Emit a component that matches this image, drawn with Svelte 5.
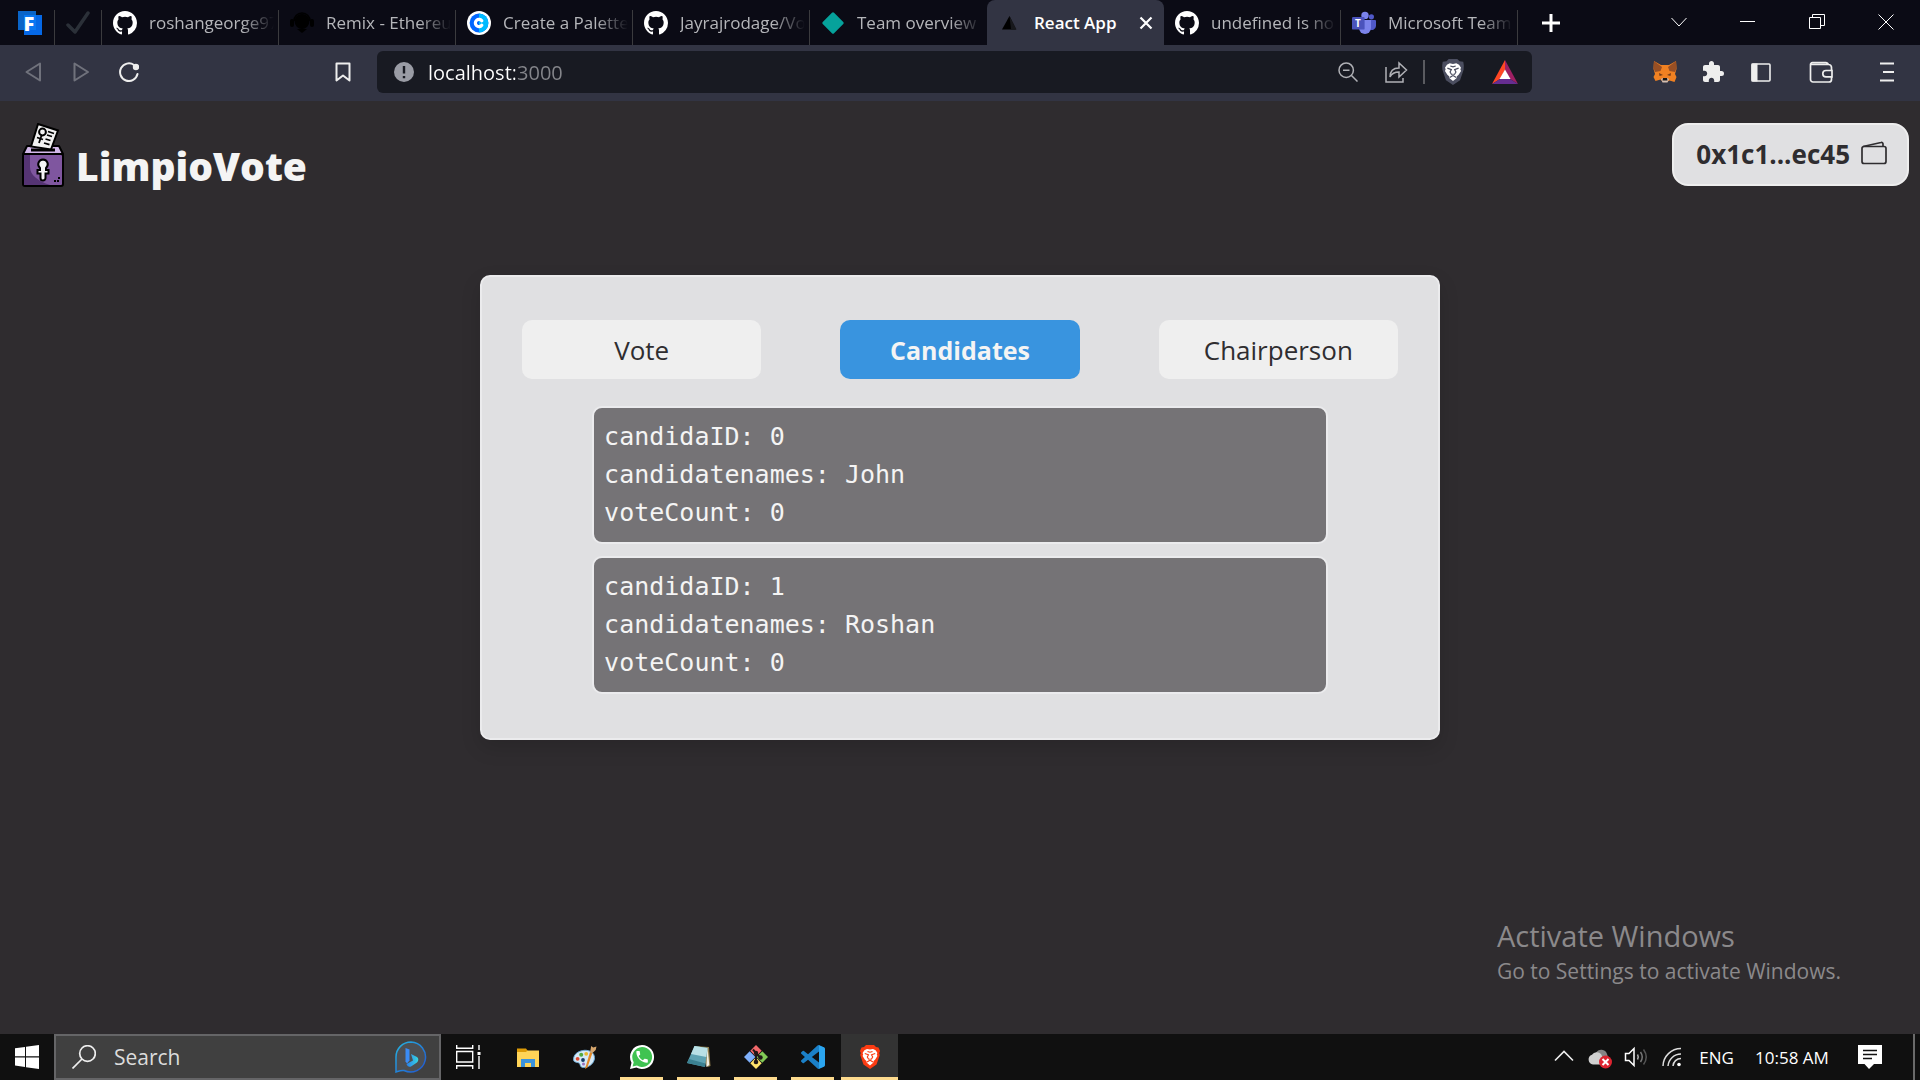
<script>
  const tabs = [
    { title: 'roshangeorge97', icon: 'github' },
    { title: 'Remix - Ethereu', icon: 'remix' },
    { title: 'Create a Palette', icon: 'coolors' },
    { title: 'Jayrajrodage/Vo', icon: 'github' },
    { title: 'Team overview', icon: 'diamond' },
    { title: 'React App', icon: 'triangle', active: true },
    { title: 'undefined is no', icon: 'github' },
    { title: 'Microsoft Team', icon: 'teams' }
  ];

  const sections = ['Vote', 'Candidates', 'Chairperson'];
  let current = $state('Candidates');
  let url = $state('localhost:3000');
  let query = $state('');

  const candidates = [
    { id: 0, name: 'John', votes: 0 },
    { id: 1, name: 'Roshan', votes: 0 }
  ];

  const apps = [
    { name: 'File Explorer', icon: 'explorer' },
    { name: 'Paint', icon: 'paint' },
    { name: 'WhatsApp', icon: 'whatsapp', running: true },
    { name: 'Notepad', icon: 'notepad', running: true },
    { name: 'Git', icon: 'git', running: true },
    { name: 'Visual Studio Code', icon: 'vscode', running: true },
    { name: 'Brave', icon: 'brave', running: true, active: true }
  ];
</script>

{#snippet lion(back)}
  <path fill="#fff" d="M12 4.600 15 4 17.600 5.200 19.400 8 18.800 9.500 19.400 11 17.200 14.600 15.600 16 15.200 17.800 12 20.400 8.800 17.800 8.400 16 6.800 14.600 4.600 11 5.200 9.500 4.600 8 6.400 5.200 9 4Z" />
  <g fill="none" stroke={back} stroke-width="1.100"><path d="m6.800 8.400 3.700 1.400-1.200 2.200 1.500 2.500M17.200 8.400l-3.700 1.400 1.200 2.200-1.500 2.500M9 17l3-1.800 3 1.800M12 13.500v2" /><path d="M9.500 6.500 12 7.200l2.500-.7" /></g>
{/snippet}

{#snippet glyph(name)}
  <svg class="i24" viewBox="0 0 24 24" aria-hidden="true">
    {#if name === 'github'}
      <path fill="#fff" d="M12 0C5.37 0 0 5.37 0 12c0 5.3 3.44 9.8 8.2 11.39.6.1.82-.26.82-.58v-2.23c-3.34.73-4.03-1.42-4.03-1.42-.55-1.38-1.33-1.75-1.33-1.75-1.09-.75.08-.73.08-.73 1.2.08 1.84 1.24 1.84 1.24 1.07 1.83 2.8 1.3 3.49 1 .1-.78.42-1.31.76-1.61-2.66-.3-5.47-1.33-5.47-5.93 0-1.31.47-2.38 1.24-3.22-.13-.3-.54-1.52.11-3.18 0 0 1.01-.32 3.3 1.23a11.5 11.5 0 0 1 6.01 0c2.29-1.55 3.3-1.23 3.3-1.23.65 1.66.24 2.88.12 3.18.77.84 1.23 1.91 1.23 3.22 0 4.61-2.81 5.62-5.48 5.92.43.37.81 1.1.81 2.22v3.29c0 .32.22.7.83.58A12 12 0 0 0 24 12C24 5.37 18.63 0 12 0Z" />
    {:else if name === 'remix'}
      <g fill="#000"><circle cx="12" cy="10.5" r="7.4" /><rect x="0" y="8" width="4" height="8" rx="2" /><rect x="20" y="8" width="4" height="8" rx="2" /><path d="M7 18h10l-5 4z" /></g>
      <path d="M4 10a8 8 0 0 1 16 0" fill="none" stroke="#000" stroke-width="1.6" />
    {:else if name === 'coolors'}
      <circle cx="12" cy="12" r="12" fill="#fff" />
      <circle cx="12" cy="12" r="9.4" fill="#06f" />
      <path d="M12 2.6a9.4 9.4 0 0 1 0 18.8z" fill="#0bf" />
      <path d="M14.800 9.800A3.600 3.600 0 1 0 14.800 14.200" fill="none" stroke="#fff" stroke-width="3.200" stroke-linecap="round" />
    {:else if name === 'diamond'}
      <rect x="4" y="4" width="16" height="16" rx="1.5" fill="#06a29b" transform="rotate(45 12 12)" />
    {:else if name === 'triangle'}
      <path d="M11.5 5 18 18.6H4z" fill="#000" /><path d="M11.5 5 18.6 18.6H13z" fill="#17181c" />
    {:else if name === 'teams'}
      <circle cx="19.4" cy="5.8" r="2.6" fill="#5059c9" />
      <path d="M15 9h8a1 1 0 0 1 1 1v5a4.2 4.2 0 0 1-7 3z" fill="#5059c9" />
      <circle cx="13" cy="4.4" r="3.7" fill="#7b83eb" />
      <path d="M7 9h12v8a6 6 0 0 1-12 0z" fill="#7b83eb" />
      <rect y="6" width="12.6" height="12.6" rx="1.2" fill="#4b53bc" />
      <text x="3.1" y="16" font-size="10" font-weight="700" fill="#fff" font-family="Open Sans, sans-serif">T</text>
    {:else if name === 'explorer'}
      <path d="M1 3.5h9l2 2.5v4H1z" fill="#dd9b07" /><path d="M1 7h9l1.6-1.6H23V22H1z" fill="#ffd457" />
      <path d="M5 22v-8h14v8h-4v-4H9v4z" fill="#3b93dc" />
    {:else if name === 'paint'}
      <path d="M.6 15C0 8 8 4.600 14 5.400c5 .6 8 4 7.400 8.600-.8 5-6 8.500-11 8.500-4 0-2.500-3.500-4.500-4.500S.8 17.500.6 15Z" fill="#d5e9f7" stroke="#6ea9d4" stroke-width="1" />
      <circle cx="4.6" cy="13.8" r="1.900" fill="#dd4830" /><circle cx="8.2" cy="9.8" r="2" fill="#52a93f" /><circle cx="13.2" cy="8.800" r="1.900" fill="#e9b72d" /><circle cx="10" cy="15" r="1.900" fill="#173d68" /><circle cx="10.500" cy="19" r="1.500" fill="#9a72bf" />
      <path d="M12 24 17 7l2.400 1-5 14.500z" fill="#e38928" /><path d="m17.200 6.500 1-5.500 2 1.500 3.300-1-.8 3.500-3.200 3z" fill="#d5a56c" />
    {:else if name === 'whatsapp'}
      <path d="M12 0a12 12 0 1 1-5.600 22.600L0 24l1.500-6.200A12 12 0 0 1 12 0z" fill="#fff" />
      <path d="M12 2a10 10 0 1 1-5 18.600L2.600 21.500l1.100-4.300A10 10 0 0 1 12 2z" fill="#3fc351" />
      <path transform="translate(4.400 4.200) scale(.64)" fill="#fff" d="M6.620 10.790c1.440 2.830 3.760 5.140 6.590 6.590l2.200-2.200c.27-.27.67-.36 1.020-.24 1.120.37 2.330.57 3.570.57.55 0 1 .45 1 1V20c0 .55-.45 1-1 1-9.390 0-17-7.610-17-17 0-.55.45-1 1-1h3.500c.55 0 1 .45 1 1 0 1.250.2 2.450.57 3.570.11.35.03.74-.25 1.020z" />
    {:else if name === 'notepad'}
      <path d="m7 1 15 1 1.500 19-3 1z" fill="#8c7a4a" /><path d="m20.500 2 1.800 18-3 2z" fill="#f1efe4" />
      <path d="M7.500 1 20.500 3 18 22 0 18z" fill="#5fa3b3" /><path d="M7.500 1 20.500 3l-1.200 9L4 9z" fill="#b9e0e6" /><path d="m0 18 18 4 .5-3.500L2 14z" fill="#3b8191" />
    {:else if name === 'git'}
      <path d="m12 0 5.700 5.700L12 11.400 6.300 5.700z" fill="#f3696b" /><path d="m18.300 6.300 5.700 5.700-5.700 5.700-5.700-5.700z" fill="#82c956" /><path d="m12 12.600 5.700 5.700L12 24l-5.700-5.700z" fill="#ffe36b" /><path d="m5.700 6.300 5.700 5.700-5.700 5.700L0 12z" fill="#7fb0fb" />
      <path d="M9 4.500 12 8v9M12 8l4.500 5" fill="none" stroke="#201818" stroke-width="2" /><circle cx="12" cy="17" r="2.300" fill="#201818" /><circle cx="16.500" cy="12.500" r="2.200" fill="#201818" /><circle cx="12" cy="8" r="2.200" fill="#201818" />
    {:else if name === 'vscode'}
      <path fill="#1b80c7" d="M23.150 2.587 18.210.21a1.494 1.494 0 0 0-1.705.29l-9.460 8.630-4.120-3.128a1 1 0 0 0-1.276.057L.327 7.261A1 1 0 0 0 .326 8.740L3.899 12 .326 15.260a1 1 0 0 0 .001 1.479L1.650 17.940a1 1 0 0 0 1.276.057l4.120-3.128 9.460 8.630a1.492 1.492 0 0 0 1.704.29l4.942-2.377A1.500 1.500 0 0 0 24 20.060V3.939a1.500 1.500 0 0 0-.85-1.352zm-5.146 14.861L10.826 12l7.178-5.448v10.896z" />
      <path fill="#2ba5ef" d="m18 .2 5.200 2.400.8 1.400v16l-.8 1.400L18 23.800z" />
    {:else if name === 'brave'}
      <path d="M8 0h8l2 2 2.500.5L22 6l-.8 2 .6 2-3.300 9.500L12 24l-6.500-4.500L2.200 10l.6-2L2 6l1.500-3.500L6 2z" fill="#fb3b12" />
      {@render lion('#fb3b12')}
    {/if}
  </svg>
{/snippet}

<div class="screen">
  <header>
    <nav class="tabstrip" aria-label="Browser tabs">
      <button class="pinned first" aria-label="Pinned tab F">
        <svg class="i24" viewBox="0 0 24 24"><path d="M6 4h18v20H6z" fill="#0568e6" /><path d="M0 0h18v19H0z" fill="#0a7cf5" opacity=".8" /><text x="5.500" y="19.500" font-size="20" font-weight="800" fill="#fff" font-family="Open Sans, sans-serif">F</text></svg>
      </button>
      <button class="pinned" aria-label="Pinned tab check">
        <svg class="i24" viewBox="0 0 24 24"><path d="m2 14 7 7L22 2" fill="none" stroke="#2b3038" stroke-width="3.500" stroke-linecap="round" stroke-linejoin="round" /></svg>
      </button>
      {#each tabs as tab, i}
        <div class="tab" class:active={tab.active} class:plain={tabs[i + 1]?.active}>
          <button class="tab-main">{@render glyph(tab.icon)}<span class="tab-title">{tab.title}</span></button>
          {#if tab.active}
            <button class="tab-close" aria-label="Close tab"><svg viewBox="0 0 14 14" class="i14"><path d="m1.500 1.500 11 11M12.500 1.500l-11 11" stroke="#fff" stroke-width="2.200" /></svg></button>
          {/if}
        </div>
      {/each}
      <button class="new-tab" aria-label="New tab"><svg class="i20" viewBox="0 0 20 20"><path d="M10 1v18M1 10h18" stroke="#fff" stroke-width="3" /></svg></button>
      <div class="window-buttons">
        <button aria-label="Search tabs"><svg class="i16" viewBox="0 0 16 16"><path d="m.5 4 7.500 8 7.500-8" /></svg></button>
        <button aria-label="Minimize"><svg class="i16" viewBox="0 0 16 16"><path d="M0 7.500h15" /></svg></button>
        <button aria-label="Restore"><svg class="i16" viewBox="0 0 16 16"><path d="M.5 3.500h11v11H.5zM3.500 3V.5h12v11H12" /></svg></button>
        <button aria-label="Close"><svg class="i16" viewBox="0 0 16 16"><path d="m.5.5 15 15m0-15-15 15" /></svg></button>
      </div>
    </nav>

    <div class="toolbar">
      <button class="tool" aria-label="Back"><svg class="i20 dim" viewBox="0 0 20 20"><path d="M17 1.500v17L3.500 10z" /></svg></button>
      <button class="tool" aria-label="Forward"><svg class="i20 dim" viewBox="0 0 20 20"><path d="M3.500 1.500v17L17 10z" /></svg></button>
      <button class="tool" aria-label="Reload"><svg class="i20" viewBox="0 0 20 20"><path d="M15 3A8.800 8.800 0 1 0 18.500 12" fill="none" stroke="#eee" stroke-width="2" stroke-linecap="round" /><circle cx="17" cy="5" r="3.200" fill="#eee" /></svg></button>
      <button class="tool bookmark" aria-label="Bookmark"><svg class="i20" viewBox="0 0 20 20"><path d="M3.500 1.500h13v17L10 13.500l-6.500 5z" fill="none" stroke="#eee" stroke-width="2" stroke-linejoin="round" /></svg></button>
      <div class="address">
        <svg class="i20" viewBox="0 0 20 20"><circle cx="10" cy="10" r="10" fill="#9a9ca5" /><path d="M10 4v7.500M10 14v2.200" stroke="#181a22" stroke-width="2.400" /></svg>
        <input class="url" aria-label="Address" bind:value={url} spellcheck="false" />
        <div class="address-tools">
          <button aria-label="Zoom"><svg class="i20" viewBox="0 0 20 20"><g fill="none" stroke="#b0b1b6" stroke-width="1.500"><circle cx="8.200" cy="8.200" r="7.200" /><path d="m13.500 13.500 6 6M5 8.200h6.500" /></g></svg></button>
          <button aria-label="Share"><svg class="i24" viewBox="0 0 24 24"><path d="M2 7v15h17v-4M6 17c0-6 3-9 9-9V3l7.500 7-7.500 7v-5c-4 0-7 1-9 5z" fill="none" stroke="#b0b1b6" stroke-width="1.500" /></svg></button>
          <span class="divider"></span>
          <button aria-label="Brave Shields"><svg class="i26" viewBox="0 0 24 24"><path d="M8 0h8l2 2 3.500.5L22 6l-.2 4-3.300 9.500L12 24l-6.500-4.500L2.200 10 2 6l.5-3.500L6 2z" fill="#4b4e60" />{@render lion('#4b4e60')}</svg></button>
          <button aria-label="Brave Rewards"><svg class="i26" viewBox="0 0 26 26"><path d="M13 1v10l-5 9-8 5z" fill="#ff4724" /><path d="M13 1v10l5 9 8 5z" fill="#9e1f63" /><path d="M0 25h26l-8-5H8z" fill="#662d91" /><path d="m13 10.500 5.500 9.500h-11z" fill="#fff" /></svg></button>
        </div>
      </div>
      <button class="tool" aria-label="MetaMask">
        <svg class="i24" viewBox="0 0 24 24"><path d="m1 1 7 4h8l7-4 .5 8-1.500 5 1.500 3-2 5-5-1.500L14 22h-4l-2.500-2.500L2.500 21 .5 17 2 14 .5 9z" fill="#f08122" /><path d="m1 1 8 6-1.500 4L2 12 .500 8zM23 1l-8 6 1.500 4 5.500 1 1.500-4z" fill="#984f24" /><path d="m6 13 4 2-3.500 1zM18 13l-4 2 3.500 1z" fill="#763d16" /><path d="m8 19 2-1h4l2 1-1.500 3.500h-5z" fill="#d5bfb2" /><path d="M10 18h4l.5 2.500h-5z" fill="#161616" /></svg>
      </button>
      <button class="tool" aria-label="Extensions"><svg class="i24" viewBox="0 0 24 24"><path fill="#eee" d="M20.500 11H19V7c0-1.100-.9-2-2-2h-4V3.500C13 2.120 11.880 1 10.500 1S8 2.120 8 3.500V5H4c-1.100 0-2 .9-2 2v3.800h1.500c1.490 0 2.700 1.210 2.700 2.700s-1.210 2.700-2.700 2.700H2V20c0 1.100.9 2 2 2h3.800v-1.500c0-1.490 1.210-2.700 2.700-2.700s2.700 1.210 2.700 2.700V22H17c1.100 0 2-.9 2-2v-4h1.500a2.500 2.500 0 0 0 0-5z" /></svg></button>
      <button class="tool" aria-label="Sidebar"><svg class="i20" viewBox="0 0 20 20"><rect x="1" y="2" width="18" height="17" rx="1" fill="none" stroke="#eee" stroke-width="1.600" /><path d="M.5 1.500h6v18h-6z" fill="#eee" /></svg></button>
      <button class="tool wide" aria-label="Wallet"><svg class="i24" viewBox="0 0 24 24"><g fill="none" stroke="#eee" stroke-width="1.700"><path d="M22.500 10V7.500a3 3 0 0 0-3-3H2M22.500 17v2.500a2.500 2.500 0 0 1-2.500 2.500H4a2.500 2.500 0 0 1-2.500-2.500V4.500a1.800 1.800 0 0 1 1.800-1.800H17a3 3 0 0 1 2.500 1.800" /><path d="M23 10.500h-6a3.200 3.200 0 0 0 0 6.400h6z" /></g></svg></button>
      <button class="tool menu" aria-label="Menu"><svg class="i20" viewBox="0 0 20 20"><path d="M3 1.500h14M6 10h11M3 18.500h14" stroke="#eee" stroke-width="2" /></svg></button>
    </div>
  </header>

  <main>
    <div class="site-head">
      <a class="brand" href="#home">
        <svg class="ballot" viewBox="0 0 42 64" aria-hidden="true">
          <path d="M5 23h32l4 8H1z" fill="#d3b8ea" stroke="#000" stroke-width="2" stroke-linejoin="round" />
          <path d="M9 27h24" stroke="#000" stroke-width="3" />
          <path d="M16 1 36 7.500 29 26.500l-20-3z" fill="#f1f1f1" stroke="#000" stroke-width="2" />
          <circle cx="20.500" cy="9" r="3.400" fill="none" stroke="#000" stroke-width="2" />
          <path d="M19.500 12.500 17 20M15 14.500l6 2M26 8.500l6 2M25 12l5 1.500M23.500 16l5 1.500M22 20l5.500 1.700" stroke="#000" stroke-width="1.800" />
          <rect x="1" y="31" width="40" height="32" rx="2" fill="#7f569f" stroke="#000" stroke-width="2" />
          <path d="M2 32h6v12c0 8 8 14 20 18H2z" fill="#553473" />
          <path d="M21 36.500a4.800 4.800 0 0 1 3 8.500v2h2.500v3.500h-3V55a2.500 2.500 0 0 1-5 0v-4.500h-3V47H18v-2a4.800 4.800 0 0 1 3-8.500z" fill="#f4f4f4" stroke="#000" stroke-width="2" />
          <path d="M32 57h2v2h-2zM35 57h2v2h-2zM36 54h2v2h-2z" />
        </svg>
        <h1>LimpioVote</h1>
      </a>
      <button class="account">
        <span>0x1c1...ec45</span>
        <svg class="i26" viewBox="0 0 26 26" fill="none" stroke="#2f2d30" stroke-width="1.700"><rect x="1" y="5.500" width="24" height="17" rx="2" /><path d="m2 5.500 18-4a1.500 1.500 0 0 1 2 1.500v2.500" /></svg>
      </button>
    </div>

    <section class="card">
      <div class="switcher">
        {#each sections as s}
          <button class:selected={current === s} onclick={() => (current = s)}>{s}</button>
        {/each}
      </div>
      <ul class="candidates">
        {#each candidates as c}
          <li>
            <p>candidaID: {c.id}</p>
            <p>candidatenames: {c.name}</p>
            <p>voteCount: {c.votes}</p>
          </li>
        {/each}
      </ul>
    </section>

    <aside class="watermark">
      <strong>Activate Windows</strong>
      <span>Go to Settings to activate Windows.</span>
    </aside>
  </main>

  <footer>
    <button class="start" aria-label="Start"><svg class="i24" viewBox="0 0 24 24"><path fill="#fff" d="M0 3.300 10 2v9.300H0zM11 1.800 24 0v11.300H11zM0 12.500h10V22L0 20.600zM11 12.500h13V24l-13-1.800z" /></svg></button>
    <div class="search">
      <svg class="i24" viewBox="0 0 24 24"><g fill="none" stroke="#eee" stroke-width="1.700"><circle cx="15.500" cy="8.500" r="7.800" /><path d="M10 14 .5 23.500" /></g></svg>
      <input aria-label="Search" placeholder="Search" bind:value={query} />
      <svg class="i32" viewBox="0 0 32 32">
        <defs>
          <linearGradient id="ring" x2="1" y2="1"><stop stop-color="#25b6e2" /><stop offset="1" stop-color="#2153d0" /></linearGradient>
          <linearGradient id="bee" x2="1" y2="0"><stop stop-color="#2a7fee" /><stop offset="1" stop-color="#37d6e0" /></linearGradient>
        </defs>
        <path d="M16 1a15 15 0 1 1-7 28.500c-3-.5-5 .5-8 1.500V16A15 15 0 0 1 16 1z" fill="#4d4f53" stroke="url(#ring)" stroke-width="1.500" />
        <path d="m10.500 7 4 1.500v11L12 22.500l-1.500-2z" fill="#3a8bf5" /><path d="m16 13 6 3c2 1.500 1.500 4 0 5.500l-6 4c-2 1-4-.5-4.500-2.500l6.500-3.500z" fill="url(#bee)" />
      </svg>
    </div>
    <button class="app taskview" aria-label="Task view"><svg class="i26" viewBox="0 0 26 26" fill="none" stroke="#fff" stroke-width="1.400"><path d="M1.700 1v3.300h16V1M1.700 25v-3.300h16V25M1.700 7.500h16V18h-16zM24 1v5M24 12v13" /><path d="M22.500 8h3v3h-3z" fill="#fff" stroke="none" /></svg></button>
    {#each apps as app}
      <button class="app" class:running={app.running} class:current={app.active} aria-label={app.name}>{@render glyph(app.icon)}</button>
    {/each}
    <div class="tray">
      <button aria-label="Show hidden icons"><svg class="i20" viewBox="0 0 20 20"><path d="m1 13.500 9-9 9 9" fill="none" stroke="#eee" stroke-width="1.600" /></svg></button>
      <button aria-label="Cloud sync error"><svg class="i24" viewBox="0 0 24 24"><path d="M8 8a6 6 0 0 1 11 1l2 6H8z" fill="#858585" /><path d="M5 19.500A5 5 0 0 1 4 9.800 6 6 0 0 1 13 9l5 10.500z" fill="#d0d0d0" /><circle cx="17.500" cy="17" r="6.500" fill="#dc2430" /><path d="m14.500 14 6 6m0-6-6 6" stroke="#fff" stroke-width="2" /></svg></button>
      <button aria-label="Volume"><svg class="i24" viewBox="0 0 24 24" fill="none" stroke-width="1.500"><path d="M1.500 8.500H5l5-5v17l-5-5H1.500z" stroke="#fff" /><path d="M13.500 9.500q1.500 2.500 0 5" stroke="#aaa" /><path d="M16.500 7q3.500 5 0 10" stroke="#777" /><path d="M19.500 4.500q5.500 7.500 0 15" stroke="#555" /></svg></button>
      <button aria-label="Network"><svg class="i20" viewBox="0 0 20 20" fill="none" stroke="#ddd" stroke-width="1.500"><path d="M1 19A18 18 0 0 1 19 1.500M6 19A13 13 0 0 1 19 7M11 19a8 8 0 0 1 8-7.500" /><circle cx="17" cy="17.500" r="1.800" fill="#fff" stroke="none" /></svg></button>
      <button class="lang">ENG</button>
      <button class="clock">10:58 AM</button>
      <button class="notify" aria-label="Notifications"><svg class="i24" viewBox="0 0 24 24"><path d="M0 0h24v19h-8l-5 5-4.500-5H0z" fill="#fff" /><path d="M5 5.500h14M5 9.500h14M5 13.500h9" stroke="#111" stroke-width="1.400" /></svg></button>
      <button class="peek" aria-label="Show desktop"></button>
    </div>
  </footer>
</div>

<style>
  :global(body) { background: #2f2c2f; }
  * { box-sizing: border-box; }
  .screen {
    min-height: 100vh;
    display: flex;
    flex-direction: column;
    font-family: "Open Sans", "Noto Sans", sans-serif;
    background: #2f2c2f;
  }
  button, input { font: inherit; color: inherit; border: 0; background: none; padding: 0; margin: 0; outline: none; }
  button { display: flex; align-items: center; justify-content: center; cursor: pointer; }
  svg { display: block; flex: none; }
  .i14 { width: 14px; height: 14px; }
  .i16 { width: 16px; height: 16px; }
  .i20 { width: 20px; height: 20px; }
  .i24 { width: 24px; height: 24px; }
  .i26 { width: 26px; height: 26px; }
  .i32 { width: 32px; height: 32px; }

  .tabstrip { display: flex; height: 45px; background: #0b0b15; font-size: 17px; color: #b5b6ba; }
  .pinned, .tab { border-right: 1px solid transparent; border-image: linear-gradient(transparent 11px, #3b3b3e 11px) 1; }
  .pinned { width: 47px; }
  .pinned.first { width: 55px; padding-left: 6px; }
  .tab { flex: 0 1 177px; min-width: 0; display: flex; align-items: center; }
  .tab-main { flex: 1; min-width: 0; gap: 12px; padding: 0 4px 0 11px; justify-content: flex-start; align-self: stretch; }
  .tab-title {
    flex: 1;
    min-width: 0;
    overflow: hidden;
    white-space: nowrap;
    text-align: left;
    mask-image: linear-gradient(to left, transparent, #000 32px);
  }
  .tab.plain { border-image: none; }
  .tab.active { background: #323443; border: 0; border-radius: 8px 8px 0 0; color: #fff; font-weight: 600; }
  .tab.active .tab-main { padding-right: 0; }
  .tab.active .tab-title { mask-image: none; }
  .tab-close { width: 36px; height: 36px; }
  .new-tab { width: 66px; }
  .window-buttons { display: flex; margin-left: auto; padding-bottom: 2px; }
  .window-buttons button { width: 69px; }
  .window-buttons path { fill: none; stroke: #fff; }

  .toolbar { display: flex; align-items: center; height: 56px; padding: 0 3px 2px 9px; background: #323443; }
  .tool { width: 48px; height: 42px; }
  .tool.bookmark { margin: 0 10px 0 166px; }
  .tool.wide { width: 72px; }
  .tool.menu { width: 60px; }
  .dim path { fill: none; stroke: #70727c; stroke-width: 2; stroke-linejoin: round; }
  .address {
    flex: 1;
    min-width: 0;
    height: 42px;
    margin-right: 109px;
    padding: 0 14px 0 17px;
    display: flex;
    align-items: center;
    gap: 14px;
    border-radius: 6px;
    background: #181a22;
    font-size: 20px;
  }
  .url {
    flex: 1;
    min-width: 0;
    color: transparent;
    caret-color: #fff;
    background: linear-gradient(to right, #fff 87px, #85868b 87px) text;
  }
  .address-tools { display: flex; align-items: center; gap: 26px; }
  .divider { width: 2px; height: 24px; margin: 0 -11px; background: #5a5b60; }

  main { flex: 1; position: relative; padding: 22px 0; color: #2f2d30; }
  .site-head { display: flex; justify-content: space-between; align-items: flex-start; padding: 0 11px; }
  .brand { display: flex; gap: 12px; padding-left: 11px; color: #f4f4f4; text-decoration: none; }
  .ballot { width: 42px; height: 64px; }
  h1 { margin: 17px 0 0; font-size: 39px; line-height: 52px; font-weight: 800; }
  .account {
    height: 63px;
    padding: 0 20px 2px 22px;
    gap: 11px;
    border: 2px solid #eee;
    border-radius: 16px;
    background: #e0e0e2;
    font-size: 26px;
    font-weight: 700;
  }
  .card {
    width: 50%;
    margin: 87px auto 0;
    padding: 43px 40px 44px;
    border: 2px solid #ebebed;
    border-radius: 10px;
    background: #e0e0e2;
    box-shadow: 0 8px 20px #0002;
  }
  .site-head + .card { margin-top: 83px; }
  .switcher { display: grid; grid-template-columns: repeat(3, 1fr); gap: 79px; }
  .switcher button { height: 59px; border-radius: 10px; background: #efefef; font-size: 26px; }
  .switcher button.selected { background: #3994df; color: #f4f4f4; font-size: 25px; font-weight: 700; }
  .candidates {
    width: 84%;
    margin: 27px auto 0;
    padding: 0;
    display: grid;
    gap: 12px;
    list-style: none;
    font: 25px/38px "DejaVu Sans Mono", monospace;
    color: #f4f4f4;
  }
  li { padding: 10px; border: 2px solid #ebebed; border-radius: 10px; background: #757376; }
  p { margin: 0; }
  .watermark { position: absolute; right: 79px; bottom: 48px; display: grid; color: #8b898b; }
  .watermark strong { font-size: 29px; line-height: 40px; font-weight: 400; }
  .watermark span { font-size: 21px; line-height: 30px; }

  footer { display: flex; height: 46px; background: #101010; color: #fff; }
  .start { width: 54px; }
  .search {
    flex: 0 1 387px;
    min-width: 0;
    display: flex;
    align-items: center;
    gap: 18px;
    padding: 0 12px 0 16px;
    border: 2px solid #656567;
    background: #404040;
    font-size: 21px;
  }
  .search input { flex: 1; min-width: 0; }
  .search input::placeholder { color: #dcdcdc; opacity: 1; }
  .app { width: 57px; background: linear-gradient(#fddb8e, #fddb8e) no-repeat center bottom / 0 3px; }
  .app.taskview { width: 53px; margin-right: 5px; }
  .app.running { background-size: 43px 3px; }
  .app.current { background-size: 100% 3px; background-color: #333; }
  .tray { display: flex; margin-left: auto; font-size: 17px; }
  .tray button { width: 36px; }
  .tray .lang { width: 61px; padding-right: 8px; }
  .tray .clock { width: 82px; }
  .tray .notify { width: 80px; padding-right: 6px; }
  .tray .peek { width: 7px; border-left: 2px solid #6a6a6a; }
</style>
